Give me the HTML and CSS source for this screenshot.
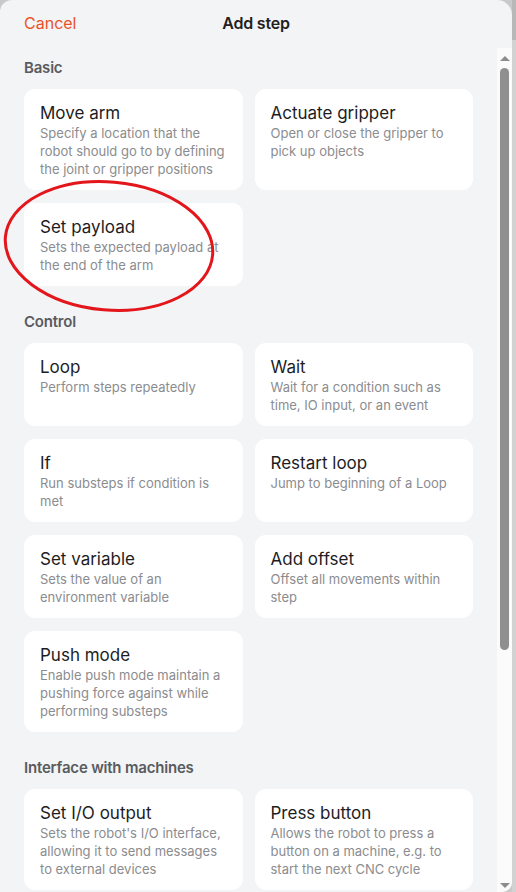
FILE: index.html
```html
<!DOCTYPE html>
<html lang="en">
<head>
  <meta charset="UTF-8">
  <meta name="viewport" content="width=device-width, initial-scale=1.0">
  <title>Add step</title>
  <link rel="stylesheet" href="styles.css">
</head>
<body>
  <div class="sheet">
    <!-- Header -->
    <div class="header">
      <span class="cancel">Cancel</span>
      <span class="title">Add step</span>
    </div>

    <div class="body">
      <div class="list">
        <!-- Basic -->
        <div class="group first">
          <h2>Basic</h2>
          <div class="grid">
            <div class="card">
              <h3>Move arm</h3>
              <p>Specify a location that the robot should go to by defining the joint or gripper positions</p>
            </div>
            <div class="card">
              <h3>Actuate gripper</h3>
              <p>Open or close the gripper to pick up objects</p>
            </div>
            <div class="card">
              <h3>Set payload</h3>
              <p>Sets the expected payload at the end of the arm</p>
            </div>
          </div>
        </div>

        <!-- Control -->
        <div class="group">
          <h2>Control</h2>
          <div class="grid">
            <div class="card">
              <h3>Loop</h3>
              <p>Perform steps repeatedly</p>
            </div>
            <div class="card">
              <h3>Wait</h3>
              <p>Wait for a condition such as time, IO input, or an event</p>
            </div>
            <div class="card">
              <h3>If</h3>
              <p>Run substeps if condition is met</p>
            </div>
            <div class="card">
              <h3>Restart loop</h3>
              <p>Jump to beginning of a Loop</p>
            </div>
            <div class="card">
              <h3>Set variable</h3>
              <p>Sets the value of an environment variable</p>
            </div>
            <div class="card">
              <h3>Add offset</h3>
              <p>Offset all movements within step</p>
            </div>
            <div class="card">
              <h3>Push mode</h3>
              <p>Enable push mode maintain a pushing force against while performing substeps</p>
            </div>
          </div>
        </div>

        <!-- Interface with machines -->
        <div class="group">
          <h2>Interface with machines</h2>
          <div class="grid">
            <div class="card">
              <h3>Set I/O output</h3>
              <p>Sets the robot's I/O interface, allowing it to send messages to external devices</p>
            </div>
            <div class="card">
              <h3>Press button</h3>
              <p>Allows the robot to press a button on a machine, e.g. to start the next CNC cycle</p>
            </div>
          </div>
        </div>
      </div>

      <div class="scrollbar">
        <div class="arrow up"></div>
        <div class="thumb"></div>
        <div class="arrow down"></div>
      </div>
    </div>

    <!-- annotation -->
    <svg class="mark" width="224" height="140" viewBox="0 0 224 140">
      <ellipse cx="108" cy="68" rx="104" ry="64" fill="none" stroke="#e3161b" stroke-width="3" transform="rotate(5 108 68)"/>
    </svg>
  </div>
  <div class="backdrop"></div>
</body>
</html>
```

FILE: styles.css
```css
body {
  margin: 0;
  padding: 0;
  display: flex;
  height: 892px;
  overflow: hidden;
  background: #c9c9c9;
  font-family: Inter, "Noto Sans", sans-serif;
  color: #1f1f1f;
}

.sheet {
  position: relative;
  width: 512px;
  height: 892px;
  flex-shrink: 0;
  display: flex;
  flex-direction: column;
  background: #f3f4f6;
  border-radius: 12px 15px 10px 0;
  overflow: hidden;
}

.backdrop {
  flex: 1;
  background: linear-gradient(#b8b8b8 0, #b8b8b8 40px, #d2d2d2 40px);
}

.header {
  position: relative;
  height: 46px;
  display: flex;
  align-items: center;
  padding: 0 24px;
  flex-shrink: 0;
}

.cancel {
  color: #ea5329;
  font-size: 16px;
}

.title {
  position: absolute;
  left: 0;
  right: 0;
  text-align: center;
  font-size: 16px;
  font-weight: 600;
  letter-spacing: -0.2px;
  pointer-events: none;
}

.body {
  flex: 1;
  display: flex;
  min-height: 0;
  margin-top: 2px;
}

.list {
  flex: 1;
  padding: 0 24px;
}

.group {
  padding-top: 26px;
}

.group.first {
  padding-top: 10px;
}

h2 {
  margin: 0 0 11px;
  font-size: 15px;
  line-height: 20px;
  font-weight: 600;
  color: #595b5f;
  letter-spacing: -0.2px;
}

.grid {
  display: grid;
  grid-template-columns: 1fr 1fr;
  gap: 13px 12px;
}

.card {
  background: #fff;
  border-radius: 11px;
  padding: 13px 16px 12px 16px;
}

h3 {
  margin: 0;
  font-size: 17px;
  line-height: 22px;
  font-weight: 400;
  color: #1d1d1f;
}

.card p {
  margin: 0;
  font-size: 13px;
  line-height: 18px;
  color: #8b8c8f;
}

.scrollbar {
  width: 15px;
  background: #fbfbfb;
  display: flex;
  flex-direction: column;
  align-items: center;
}

.arrow {
  width: 0;
  height: 0;
  border-left: 5px solid transparent;
  border-right: 5px solid transparent;
}

.arrow.up {
  margin-top: 8px;
  border-bottom: 5px solid #8c8c8c;
}

.arrow.down {
  margin-top: auto;
  margin-bottom: 4px;
  border-top: 5px solid #8c8c8c;
}

.thumb {
  width: 9px;
  height: 582px;
  margin-top: 7px;
  border-radius: 5px;
  background: #8f8f8f;
}

.mark {
  position: absolute;
  left: 1px;
  top: 178px;
}
```
